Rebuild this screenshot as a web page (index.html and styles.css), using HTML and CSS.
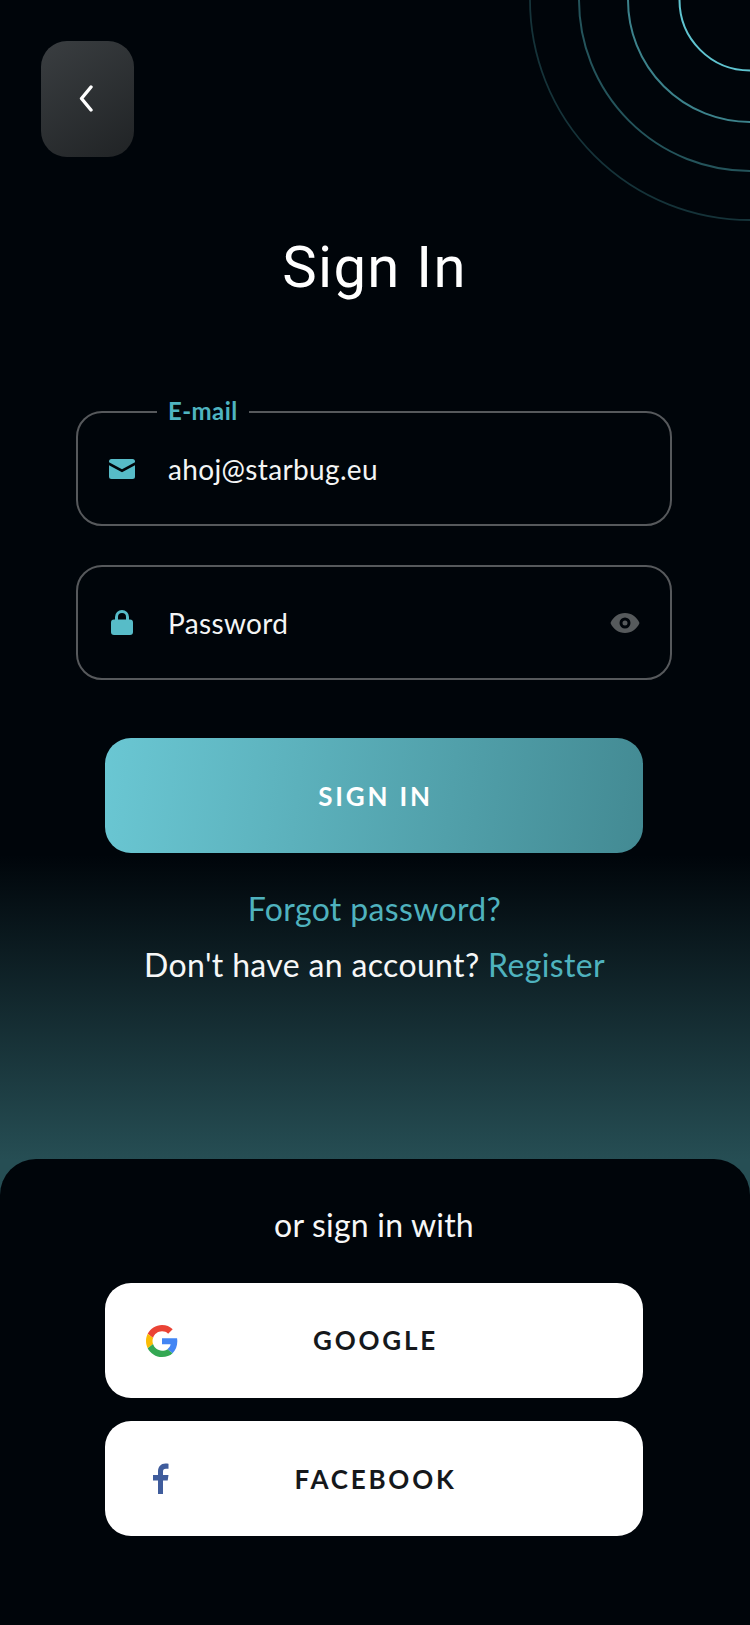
FILE: index.html
```html
<!DOCTYPE html>
<html lang="en">
<head>
<meta charset="utf-8">
<title>Sign In</title>
<link rel="stylesheet" href="styles.css">
</head>
<body>
<main class="screen">
  <svg class="rings" width="221" height="221" viewBox="529 0 221 221" fill="none" aria-hidden="true">
    <circle cx="750" cy="0" r="70.500" stroke="#5fc4d0" stroke-width="2"/>
    <circle cx="750" cy="0" r="122" stroke="#3c828b" stroke-width="2"/>
    <circle cx="750" cy="0" r="171" stroke="#24545b" stroke-width="2"/>
    <circle cx="750" cy="0" r="220" stroke="#153339" stroke-width="1.800"/>
  </svg>
  <section class="upper">
    <button class="back" aria-label="Back">
      <svg width="14" height="27" viewBox="0 0 14 27" fill="none"><path d="M12 2 2.500 13.500 12 25" stroke="#fff" stroke-width="3.400" stroke-linecap="round" stroke-linejoin="round"/></svg>
    </button>
    <h1 class="title">Sign In</h1>
    <form class="form">
      <div class="field">
        <span class="field-label">E-mail</span>
        <svg class="field-icon" width="26" height="20" viewBox="0 0 26 20"><path fill="#57bcc8" d="M2.500 0h21A2.500 2.500 0 0 1 26 2.500v.8L13 10.300 0 3.300v-.8A2.500 2.500 0 0 1 2.500 0Z"/><path fill="#57bcc8" d="M0 6.300 13 13.300 26 6.300V17.500A2.500 2.500 0 0 1 23.500 20h-21A2.500 2.500 0 0 1 0 17.500Z"/></svg>
        <span class="field-text">ahoj@starbug.eu</span>
      </div>
      <div class="field">
        <svg class="field-icon" width="26" height="25" viewBox="0 0 26 25"><path fill="none" stroke="#57bcc8" stroke-width="3" d="M7.500 11V7a5.500 5.500 0 0 1 11 0v4"/><rect x="2" y="9.500" width="22" height="15.500" rx="3" fill="#57bcc8"/></svg>
        <span class="field-text">Password</span>
        <svg class="eye" width="30" height="20" viewBox="0 0 30 20"><path fill="#565a5c" fill-rule="evenodd" d="M15 0C8.500 0 3 4 .500 10 3 16 8.500 20 15 20s12-4 14.500-10C27 4 21.500 0 15 0Zm0 4.500a5.500 5.500 0 1 1 0 11 5.500 5.500 0 0 1 0-11Zm0 3a2.500 2.500 0 1 0 0 5 2.500 2.500 0 0 0 0-5Z"/></svg>
      </div>
      <button class="btn btn-primary" type="button">SIGN IN</button>
    </form>
    <p class="link-line forgot link">Forgot password?</p>
    <p class="link-line second">Don't have an account? <span class="link">Register</span></p>
  </section>
  <section class="sheet">
    <p class="sheet-title">or sign in with</p>
    <button class="btn btn-white" type="button">
      <svg class="brand" width="32" height="32" viewBox="0 0 48 48"><path fill="#EA4335" d="M24 9.500c3.540 0 6.710 1.220 9.210 3.600l6.850-6.850C35.900 2.380 30.470 0 24 0 14.620 0 6.510 5.380 2.560 13.220l7.980 6.190C12.430 13.720 17.740 9.500 24 9.500z"/><path fill="#4285F4" d="M46.980 24.550c0-1.570-.15-3.090-.38-4.550H24v9.020h12.940c-.58 2.960-2.260 5.480-4.780 7.180l7.730 6c4.510-4.180 7.090-10.360 7.090-17.650z"/><path fill="#FBBC05" d="M10.530 28.590c-.48-1.450-.76-2.990-.76-4.590s.27-3.140.76-4.590l-7.980-6.190C.92 16.460 0 20.120 0 24c0 3.880.92 7.540 2.560 10.780l7.970-6.190z"/><path fill="#34A853" d="M24 48c6.480 0 11.930-2.130 15.890-5.810l-7.730-6c-2.150 1.450-4.920 2.300-8.160 2.300-6.260 0-11.570-4.220-13.470-9.910l-7.980 6.190C6.510 42.620 14.620 48 24 48z"/></svg>
      <span>GOOGLE</span>
    </button>
    <button class="btn btn-white" type="button">
      <svg class="brand" width="32" height="32" viewBox="1.500 0 32 32"><path fill="#3f5c9c" d="M13.500 31V17.500H8.500V12h5V8.500C13.500 3.500 16.500.500 21 .500c1.300 0 2.500.1 3 .2v5h-2.500c-2.300 0-3 1.200-3 3V12H24l-.8 5.500h-4.700V31Z"/></svg>
      <span>FACEBOOK</span>
    </button>
  </section>
</main>
</body>
</html>
```
FILE: styles.css
```css
* { box-sizing: border-box; }
html, body { margin: 0; padding: 0; background: #00050a; }
body { font-family: "Lato", "Noto Sans", sans-serif; color: #fff; }
p, h1 { margin: 0; }

.screen {
  position: relative;
  width: 750px;
  height: 1625px;
  overflow: hidden;
  display: flex;
  flex-direction: column;
  background: linear-gradient(180deg, #00050a 0, #00050a 855px, #264e54 1160px);
}
.rings { position: absolute; top: 0; right: 0; }

.upper { flex: none; height: 1159px; padding: 41px 0 0 41px; }
.back {
  display: flex;
  align-items: center;
  justify-content: center;
  width: 93px;
  height: 116px;
  padding: 0 3px 2px 0;
  border: 0;
  border-radius: 26px;
  background: linear-gradient(145deg, #3a3e41, #202325);
}
.title {
  width: 667px;
  margin-top: 76px;
  text-align: center;
  font-family: "Roboto", sans-serif;
  font-size: 58px;
  font-weight: 400;
  line-height: 68px;
  letter-spacing: 1.300px;
}
.form { width: 666px; margin-top: 110px; display: flex; flex-direction: column; align-items: center; }
.field {
  position: relative;
  display: flex;
  align-items: center;
  width: 596px;
  height: 115px;
  margin-bottom: 39px;
  padding: 0 30px 0 31px;
  border: 2px solid #56595c;
  border-radius: 26px;
}
.field-label {
  position: absolute;
  top: -15px;
  left: 79px;
  padding: 0 11px;
  background: #00050a;
  color: #4fb4c0;
  font-size: 24px;
  font-weight: 700;
  line-height: 26px;
  letter-spacing: 0.4px;
}
.field-icon { flex: none; }
.field-text { flex: 1; margin-left: 33px; font-size: 28px; letter-spacing: 0.35px; color: #f4f5f5; }
.eye { flex: none; }

.btn {
  display: flex;
  align-items: center;
  justify-content: center;
  position: relative;
  flex: none;
  width: 538px;
  height: 115px;
  padding: 0 0 0 3px;
  border: 0;
  border-radius: 26px;
  font-family: "Lato", sans-serif;
  font-size: 26px;
  font-weight: 700;
  letter-spacing: 2.800px;
}
.btn-primary {
  margin-top: 19px;
  color: #fff;
  background: linear-gradient(97deg, #6ac7d3, #438a93);
}
.link-line { width: 667px; text-align: center; font-size: 32px; line-height: 40px; letter-spacing: 0.35px; }
.link { color: #4fb2be; }
.forgot { margin-top: 36px; }
.second { margin-top: 16px; color: #f6f7f7; }

.sheet {
  flex: 1;
  display: flex;
  flex-direction: column;
  align-items: center;
  gap: 23.500px;
  padding: 46px 2px 0 0;
  border-radius: 36px 36px 0 0;
  background: #00050a;
}
.sheet-title { font-size: 32px; line-height: 40px; margin-bottom: 14px; letter-spacing: 0.2px; color: #f6f7f7; }
.btn-white { background: #fff; color: #15181b; }
.brand { position: absolute; left: 41px; top: 42px; }
```
